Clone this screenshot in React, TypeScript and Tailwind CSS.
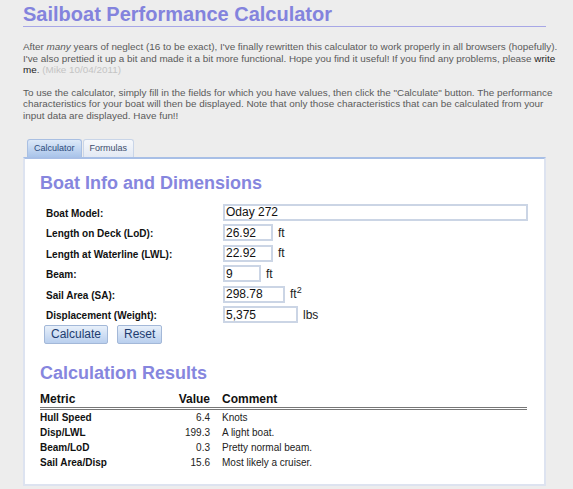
import React from "react";

const fields = [
  { label: "Boat Model:", value: "Oday 272", w: "w-[305px]", unit: null },
  { label: "Length on Deck (LoD):", value: "26.92", w: "w-[50px]", unit: "ft" },
  { label: "Length at Waterline (LWL):", value: "22.92", w: "w-[50px]", unit: "ft" },
  { label: "Beam:", value: "9", w: "w-[38px]", unit: "ft" },
  { label: "Sail Area (SA):", value: "298.78", w: "w-[62px]", unit: "ft2" },
  { label: "Displacement (Weight):", value: "5,375", w: "w-[75px]", unit: "lbs" },
];

const results = [
  { metric: "Hull Speed", value: "6.4", comment: "Knots" },
  { metric: "Disp/LWL", value: "199.3", comment: "A light boat." },
  { metric: "Beam/LoD", value: "0.3", comment: "Pretty normal beam." },
  { metric: "Sail Area/Disp", value: "15.6", comment: "Most likely a cruiser." },
];

function Unit({ unit }: { unit: string | null }) {
  if (!unit) return null;
  if (unit === "ft2") {
    return (
      <span className="ml-[5px] text-[12px] text-[#222]">
        ft<sup className="text-[9px] relative top-[-5px]">2</sup>
      </span>
    );
  }
  return <span className="ml-[5px] text-[12px] text-[#222]">{unit}</span>;
}

function Button({ children }: { children: React.ReactNode }) {
  return (
    <button className="h-[19px] px-[6px] text-[12px] leading-[17px] text-[#1e3d70] border border-[#a3b8d8] rounded-[2px] bg-gradient-to-b from-[#e8f0fa] to-[#b9cfee]">
      {children}
    </button>
  );
}

export default function App() {
  return (
    <div className="w-[573px] min-h-[489px] bg-[#ededed] font-['Liberation_Sans',Arial,sans-serif] pl-[23px] pr-[27px] pt-[3px] pb-[5px]">
      <h1 className="text-[20px] leading-[23px] font-bold text-[#8383dd] border-b border-[#a7a7e6]">
        Sailboat Performance Calculator
      </h1>

      <p className="mt-[14px] text-[9.9px] leading-[11.5px] text-[#5a5a5a] whitespace-nowrap">
        After <i>many</i> years of neglect (16 to be exact), I've finally rewritten this calculator to work properly in
        all browsers (hopefully).
        <br />
        I've also prettied it up a bit and made it a bit more functional. Hope you find it useful! If you find any
        problems, please <span className="text-[#222]">write</span>
        <br />
        <span className="text-[#222]">me</span>. <span className="text-[#c4c4c4]">(Mike 10/04/2011)</span>
      </p>

      <p className="mt-[11px] text-[9.9px] leading-[11.5px] text-[#5a5a5a] whitespace-nowrap">
        To use the calculator, simply fill in the fields for which you have values, then click the "Calculate" button.
        The performance
        <br />
        characteristics for your boat will then be displayed. Note that only those characteristics that can be
        calculated from your
        <br />
        input data are displayed. Have fun!!
      </p>

      <div className="mt-[18px] flex gap-[1px] pl-[4px]">
        <div className="h-[18px] px-[6px] flex items-center text-[9px] text-[#2c4a7a] border border-b-0 border-[#a9bfe2] rounded-t-[3px] bg-gradient-to-b from-[#dde9f8] to-[#a9c4ea]">
          Calculator
        </div>
        <div className="h-[18px] px-[6px] flex items-center text-[9px] text-[#3c4d6d] border border-b-0 border-[#c9d5e8] rounded-t-[3px] bg-gradient-to-b from-[#f6f8fc] to-[#e3e9f3]">
          Formulas
        </div>
      </div>

      <div className="bg-white border-2 border-[#dde3f0] border-t-[#a8bfe6] pl-[15px] pr-[16px] pt-[13px] pb-[14px]">
        <h2 className="text-[18px] leading-[22px] font-bold text-[#8686de]">Boat Info and Dimensions</h2>

        <div className="mt-[8px] pl-[6px]">
          {fields.map((f) => (
            <div key={f.label} className="h-[20.5px] flex items-center">
              <div className="w-[177px] pt-[2px] text-[10px] font-bold text-[#111]">{f.label}</div>
              <input
                readOnly
                value={f.value}
                className={`${f.w} h-[17px] px-[1px] text-[12px] text-[#111] border-2 border-[#cbd5e5] bg-white outline-none`}
              />
              <Unit unit={f.unit} />
            </div>
          ))}
        </div>

        <div className="mt-[0px] flex gap-[9px] pl-[4px]">
          <Button>Calculate</Button>
          <Button>Reset</Button>
        </div>

        <h2 className="mt-[18px] text-[18px] leading-[22px] font-bold text-[#8686de]">Calculation Results</h2>

        <table className="mt-[8px] w-[487px] border-collapse">
          <thead>
            <tr className="border-b-[3px] border-double border-[#777]">
              <th className="text-left text-[12px] font-bold text-[#111] pb-[1px] leading-[14px]">Metric</th>
              <th className="w-[60px] text-right text-[12px] font-bold text-[#111] pb-[1px] leading-[14px]">Value</th>
              <th className="text-left text-[12px] font-bold text-[#111] pl-[12px] pb-[1px] leading-[14px]">Comment</th>
            </tr>
          </thead>
          <tbody>
            {results.map((r) => (
              <tr key={r.metric}>
                <td className="w-[110px] text-[10px] font-bold text-[#111] leading-[15px]">{r.metric}</td>
                <td className="text-right text-[10px] text-[#222] leading-[15px]">{r.value}</td>
                <td className="pl-[12px] text-[10px] text-[#222] leading-[15px]">{r.comment}</td>
              </tr>
            ))}
          </tbody>
        </table>
      </div>
    </div>
  );
}
